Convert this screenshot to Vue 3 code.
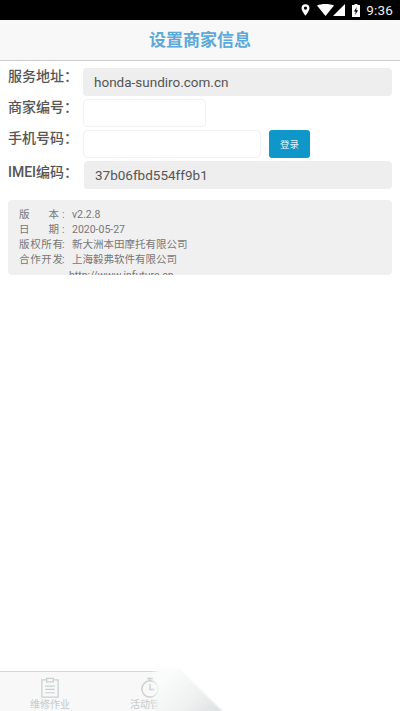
<template>
  <div class="page">
    <div class="status-bar">
      <svg class="st-pin" viewBox="0 0 10 13"><path fill-rule="evenodd" d="M5 0a4.400 4.400 0 0 0-4.400 4.400C.6 7.600 5 13 5 13s4.400-5.400 4.400-8.600A4.400 4.400 0 0 0 5 0zm0 6.200a1.800 1.800 0 1 1 0-3.600 1.800 1.800 0 0 1 0 3.600z" fill="#fff"/></svg>
      <svg class="st-wifi" viewBox="0 0 17 12"><path d="M0 1.500C2.300.500 5.300 0 8.500 0s6.200.500 8.500 1.500L8.500 12z" fill="#fff"/></svg>
      <svg class="st-signal" viewBox="0 0 12 12"><path d="M12 0v12H0z" fill="#fff"/></svg>
      <svg class="st-batt" viewBox="0 0 8 13"><path fill-rule="evenodd" d="M2.500 0h3v1H8v12H0V1h2.500zM4.700 3 2 7.600h1.700L3.200 11 6 6.300H4.200z" fill="#fff"/></svg>
      <span class="st-time">9:36</span>
    </div>

    <div class="title-bar">设置商家信息</div>

    <div class="form">
      <div class="row">
        <span class="label">服务地址：</span>
        <div class="field grey">honda-sundiro.com.cn</div>
      </div>
      <div class="row">
        <span class="label">商家编号：</span>
        <input class="field blank short" type="text" />
      </div>
      <div class="row">
        <span class="label">手机号码：</span>
        <input class="field blank phone" type="text" />
        <button class="btn-login">登录</button>
      </div>
      <div class="row">
        <span class="label label-imei">IMEI编码：</span>
        <div class="field grey imei">37b06fbd554ff9b1</div>
      </div>
    </div>

    <div class="about">
      <div class="about-line" v-for="l in about" :key="l.k">
        <span class="about-key" :class="{ spread: l.k.length == 2 }"><i v-for="c in l.k" :key="c">{{ c }}</i></span>
        <span class="about-colon">:</span>
        <span>{{ l.v }}</span>
      </div>
      <div class="about-url">http://www.infuture.cn</div>
    </div>

    <div class="spacer"></div>

    <div class="tabs">
      <div class="tab">
        <svg class="tab-icon" viewBox="0 0 22 22" fill="none" stroke="#c9cfcf" stroke-width="1.300">
          <path d="M7.500 3H2.500v18h17V3h-5"/>
          <path d="M7.500 1.500h7v3.500h-7zM6 9.500h10M6 13h10M6 16.500h10"/>
        </svg>
        <span>维修作业</span>
      </div>
      <div class="tab">
        <svg class="tab-icon" viewBox="0 0 22 22" fill="none" stroke="#c9cfcf" stroke-width="1.500">
          <circle cx="11" cy="12.500" r="8.500"/>
          <path d="M8 1.500h6M11 1.500v2.500M11 7.500v5.500h5"/>
        </svg>
        <span>活动管理</span>
      </div>
      <div class="tab"></div>
      <div class="tab"></div>
    </div>

    <div class="corner-mask"></div>
  </div>
</template>

<script setup>
const about = [
  { k: '版本', v: 'v2.2.8' },
  { k: '日期', v: '2020-05-27' },
  { k: '版权所有', v: '新大洲本田摩托有限公司' },
  { k: '合作开发', v: '上海毅弗软件有限公司' }
]
</script>

<style>
body { margin: 0; background: #fff; }
</style>

<style scoped>
.page { position: relative; display: flex; flex-direction: column; width: 400px; height: 711px; overflow: hidden; background: #fff; font-family: Roboto, "Noto Sans CJK SC", sans-serif; color: #555; }

.status-bar { display: flex; align-items: center; justify-content: flex-end; height: 20px; flex: none; background: #000; padding-right: 7px; box-sizing: border-box; }
.st-pin { width: 9px; height: 12px; margin-right: 7px; }
.st-wifi { width: 17px; height: 12px; margin-right: -1px; }
.st-signal { width: 12px; height: 12px; margin-right: 7px; }
.st-batt { width: 8px; height: 13px; margin-right: 6px; }
.st-time { color: #eee; font-size: 13.500px; letter-spacing: 0.200px; }

.title-bar { flex: none; height: 41px; line-height: 40px; box-sizing: border-box; text-align: center; background: #f8f8f8; border-bottom: 1px solid #ccc; color: #5ba9d8; font-size: 17px; font-weight: 700; }

.form { flex: none; height: 129px; padding: 7px 8px 0; box-sizing: border-box; display: flex; flex-direction: column; }
.row { display: flex; align-items: flex-start; flex: none; height: 31px; }
.label { width: 75px; flex: none; white-space: nowrap; font-size: 14px; font-weight: 500; color: #555; line-height: 18px; margin-top: -1px; }
.label-imei { margin-top: 2px; }
.field { box-sizing: border-box; height: 28px; border-radius: 4px; font-size: 13.500px; line-height: 28px; padding: 0 11px; color: #555; margin: 0; font-family: inherit; }
.grey { background: #eee; flex: 1; }
.blank { background: #fff; border: 1px solid #f1f1f1; outline: none; }
.short { width: 123px; }
.phone { width: 178px; }
.imei { margin-left: 1px; }
.btn-login { width: 41px; height: 28px; margin-left: 8px; border: none; border-radius: 3px; background: #0e97c8; color: #e6f6fb; font-size: 9.500px; padding: 0; font-family: inherit; }

.about { flex: none; height: 75px; margin: 10px 8px 0; padding: 7px 12px 0 11px; box-sizing: border-box; overflow: hidden; background: #f0f0f0; border-radius: 4px; font-size: 10.500px; line-height: 15px; color: #777; }
.about-line { display: flex; }
.about-key { display: flex; justify-content: space-between; width: 44px; }
.about-key i { font-style: normal; }
.about-key.spread { padding: 0 4px 0 0; box-sizing: border-box; }
.about-colon { width: 7px; margin-right: 3px; margin-left: -1px; }
.about-url { padding-left: 50px; margin-top: 1px; }

.spacer { flex: 1; }

.tabs { flex: none; height: 40px; box-sizing: border-box; display: flex; background: #f8f8f8; border-top: 1px solid #d4d4d4; }
.tab { flex: 1; display: flex; flex-direction: column; align-items: center; padding-top: 5px; font-size: 10px; line-height: 12px; color: #c4caca; }
.tab-icon { width: 22px; height: 22px; margin-bottom: 1px; }

/* white fold over the bottom corner, soft on its left and top edges */
.corner-mask {
  position: absolute; left: 150px; right: 0; top: 664px; bottom: 0;
  background:
    linear-gradient(45deg, transparent 23.500%, #fff 25%),
    linear-gradient(135deg, #fafbfb 10%, #f0f2f2 25%, #dde1e1 40%);
  -webkit-mask-image: linear-gradient(90deg, transparent 0, #000 10px), linear-gradient(180deg, transparent 0, #000 7px);
  mask-image: linear-gradient(90deg, transparent 0, #000 10px), linear-gradient(180deg, transparent 0, #000 7px);
  -webkit-mask-composite: source-in;
  mask-composite: intersect;
}
</style>
